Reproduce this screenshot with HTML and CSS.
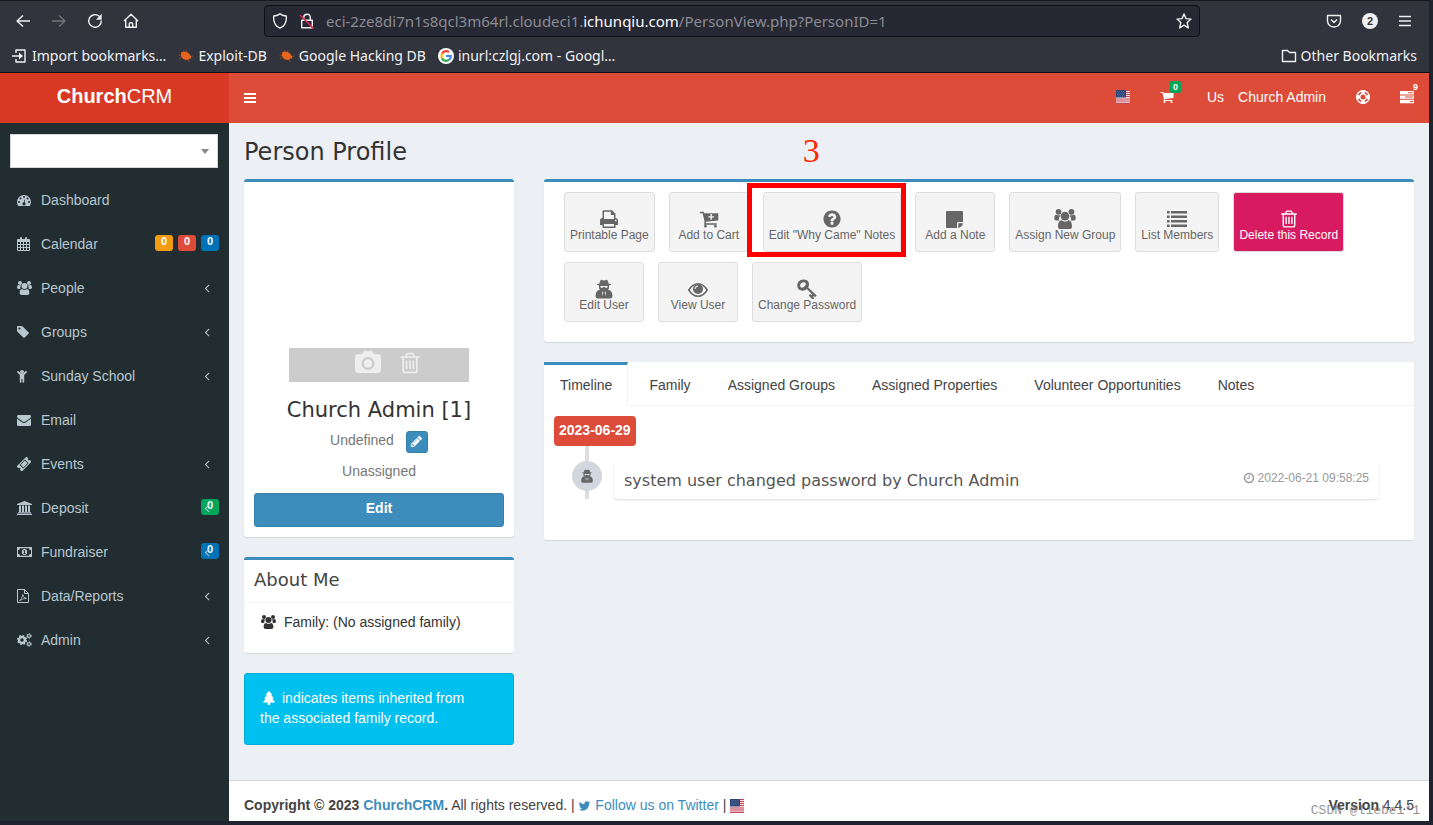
FILE: index.html
```html
<!DOCTYPE html>
<html lang="en">
<head>
<meta charset="utf-8">
<title>ChurchCRM: Person Profile</title>
<link rel="stylesheet" href="styles.css">
</head>
<body>
<svg class="sprite" aria-hidden="true">
  <symbol id="i-bars" viewBox="0 0 12 14"><path d="M0 2h12v2H0zM0 6h12v2H0zM0 10h12v2H0z"/></symbol>
  <symbol id="i-envelope" viewBox="0 0 1792 1792"><path d="M1792 710v794q0 66-47 113t-113 47h-1472q-66 0-113-47t-47-113v-794q44 49 101 87 362 246 497 345 57 42 92.500 65.500t94.500 48 110 24.500h2q51 0 110-24.500t94.500-48 92.500-65.500q170-123 498-345 57-39 100-87zm0-294q0 79-49 151t-122 123q-376 261-468 325-10 7-42.500 31t-54 38.500-52 32.500-57.500 27-50 9h-2q-23 0-50-9t-57.500-27-52-32.500-54-38.500-42.500-31q-91-64-262-182.500t-205-142.500q-62-42-117-115.500t-55-136.500q0-78 41.500-130t118.500-52h1472q65 0 112.500 47t47.500 113z"/></symbol>
  <symbol id="i-angle" viewBox="0 0 1792 1792"><path d="M1203 544q0 13-10 23l-393 393 393 393q10 10 10 23t-10 23l-50 50q-10 10-23 10t-23-10l-466-466q-10-10-10-23t10-23l466-466q10-10 23-10t23 10l50 50q10 10 10 23z"/></symbol>
  <symbol id="i-trash" viewBox="0 0 1792 1792"><path d="M704 736v576q0 14-9 23t-23 9h-64q-14 0-23-9t-9-23v-576q0-14 9-23t23-9h64q14 0 23 9t9 23zm256 0v576q0 14-9 23t-23 9h-64q-14 0-23-9t-9-23v-576q0-14 9-23t23-9h64q14 0 23 9t9 23zm256 0v576q0 14-9 23t-23 9h-64q-14 0-23-9t-9-23v-576q0-14 9-23t23-9h64q14 0 23 9t9 23zm128 724v-948h-896v948q0 22 7 40.500t14.500 27 10.500 8.500h832q3 0 10.500-8.500t14.500-27 7-40.500zm-672-1076h448l-48-117q-7-9-17-11h-317q-10 2-17 11zm928 32v64q0 14-9 23t-23 9h-96v948q0 83-47 143.500t-113 60.500h-832q-66 0-113-58.500t-47-141.500v-952h-96q-14 0-23-9t-9-23v-64q0-14 9-23t23-9h309l70-167q15-37 54-63t79-26h320q40 0 79 26t54 63l70 167h309q14 0 23 9t9 23z"/></symbol>
  <symbol id="i-pencil" viewBox="0 0 1792 1792"><path d="M491 1536l91-91-235-235-91 91v107h128v128h107zm523-928q0-22-22-22-10 0-17 7l-542 542q-7 7-7 17 0 22 22 22 10 0 17-7l542-542q7-7 7-17zm-54-192l416 416-832 832h-416v-416zm683 96q0 53-37 90l-166 166-416-416 166-165q36-38 90-38 53 0 91 38l235 234q37 39 37 91z"/></symbol>
  <symbol id="i-question" viewBox="0 0 1792 1792"><path d="M1024 1376v-192q0-14-9-23t-23-9h-192q-14 0-23 9t-9 23v192q0 14 9 23t23 9h192q14 0 23-9t9-23zm256-672q0-88-55.500-163t-138.500-116-170-41q-243 0-371 213-15 24 8 42l132 100q7 6 19 6 16 0 25-12 53-68 86-92 34-24 86-24 48 0 85.500 26t37.500 59q0 38-20 61t-68 45q-63 28-115.500 86.500t-52.500 125.500v36q0 14 9 23t23 9h192q14 0 23-9t9-23q0-19 21.500-49.500t54.500-49.500q32-18 49-28.500t46-35 44.500-48 28-60.500 12.500-81zm384 192q0 209-103 385.500t-279.500 279.500-385.500 103-385.500-103-279.500-279.500-103-385.500 103-385.500 279.500-279.500 385.500-103 385.500 103 279.500 279.500 103 385.500z"/></symbol>
  <symbol id="i-twitter" viewBox="0 0 1792 1792"><path d="M1684 408q-67 98-162 167 1 14 1 42 0 130-38 259.500t-115.500 248.500-184.500 210.500-258 146-323 54.500q-271 0-496-145 35 4 78 4 225 0 401-138-105-2-188-64.500t-114-159.500q33 5 61 5 43 0 85-11-112-23-185.500-111.500t-73.500-205.500v-4q68 38 146 41-66-44-105-115t-39-154q0-88 44-163 121 149 294.500 238.500t371.500 99.500q-8-38-8-74 0-134 94.500-228.500t228.500-94.500q140 0 236 102 109-21 205-78-37 115-142 178 93-10 186-50z"/></symbol>
  <symbol id="i-tag" viewBox="130 0 1792 1792"><path d="M576 448q0-53-37.500-90.500t-90.500-37.500-90.500 37.500-37.500 90.500 37.500 90.500 90.500 37.500 90.500-37.500 37.500-90.500zm1067 576q0 53-37 90l-491 492q-39 37-91 37-53 0-90-37l-715-716q-38-37-64.500-101t-26.500-117v-416q0-52 38-90t90-38h416q53 0 117 26.500t102 64.500l715 714q37 39 37 91z"/></symbol>
  <symbol id="i-cart" viewBox="0 0 1792 1792"><path d="M704 1536q0 52-38 90t-90 38-90-38-38-90 38-90 90-38 90 38 38 90zm896 0q0 52-38 90t-90 38-90-38-38-90 38-90 90-38 90 38 38 90zm128-1088v512q0 24-16.500 42.500t-40.500 21.500l-1044 122q13 60 13 70 0 16-24 64h920q26 0 45 19t19 45-19 45-45 19h-1024q-26 0-45-19t-19-45q0-11 8-31.500t16-36 21.500-40 15.500-29.500l-177-823h-204q-26 0-45-19t-19-45 19-45 45-19h256q16 0 28.500 6.500t19.500 15.500 13 24.500 8 26 5.500 29.500 4.500 26h1201q26 0 45 19t19 45z"/></symbol>
  <symbol id="i-cartplus" viewBox="0 0 1792 1792"><path fill-rule="evenodd" d="M704 1536q0 52-38 90t-90 38-90-38-38-90 38-90 90-38 90 38 38 90zm896 0q0 52-38 90t-90 38-90-38-38-90 38-90 90-38 90 38 38 90zm128-1088v512q0 24-16.500 42.500t-40.500 21.500l-1044 122q13 60 13 70 0 16-24 64h920q26 0 45 19t19 45-19 45-45 19h-1024q-26 0-45-19t-19-45q0-11 8-31.500t16-36 21.500-40 15.500-29.500l-177-823h-204q-26 0-45-19t-19-45 19-45 45-19h256q16 0 28.500 6.500t19.500 15.500 13 24.500 8 26 5.500 29.500 4.500 26h1201q26 0 45 19t19 45zM1024 448v192h-192v128h192v192h128v-192h192v-128h-192v-192z"/></symbol>
  <symbol id="i-dashboard" viewBox="0 0 14 14"><path d="M7 2a7 7 0 0 0-6.100 10.400q.2.600.7.600h10.800q.5 0 .7-.6A7 7 0 0 0 7 2z"/><g fill="#222d32"><circle cx="2" cy="9" r="1"/><circle cx="3.500" cy="5.500" r="1"/><circle cx="7" cy="4" r="1"/><circle cx="10.500" cy="5.500" r="1"/><circle cx="12" cy="9" r="1"/><circle cx="7" cy="10.800" r="1.600"/><path d="M6.600 10.500l.8-4 .7.200-.7 4z"/></g></symbol>
  <symbol id="i-calendar" viewBox="0 0 14 14"><path fill-rule="evenodd" d="M1 2h2V1q0-1 1-1t1 1v1h3V1q0-1 1-1t1 1v1h2q1 0 1 1v10q0 1-1 1H1q-1 0-1-1V3q0-1 1-1zm0 3v2h2V5zm3 0v2h2V5zm3 0v2h2V5zm3 0v2h2V5zM1 8v2h2V8zm3 0v2h2V8zm3 0v2h2V8zm3 0v2h2V8zM1 11v2h2v-2zm3 0v2h2v-2zm3 0v2h2v-2zm3 0v2h2v-2z"/></symbol>
  <symbol id="i-users" viewBox="0 0 15 14"><circle cx="3" cy="2" r="2"/><circle cx="12" cy="2" r="2"/><path d="M3.200 7.200Q3.200 5.600 4.300 4.300Q3 4.700 1.500 4Q0 3.800 0 6.600Q0 8 1.300 8h2.500q-.6-.3-.6-.8zM11.800 7.200q0-1.600-1.100-2.900 1.300.4 2.800-.3Q15 3.800 15 6.600 15 8 13.700 8h-2.500q.6-.3.600-.8z"/><circle cx="7.500" cy="5" r="3"/><path d="M5 7.900Q2.800 8 2.600 12q0 2 2 2h5.800q2 0 2-2Q12.200 8 10 7.900 7.500 9.800 5 7.900z"/></symbol>
  <symbol id="i-child" viewBox="0 0 14 14"><circle cx="5" cy="2.800" r="1.900"/><path d="M.3 2.300q.6-.6 1.300 0L4 4.600h2l2.400-2.300q.7-.6 1.300 0t0 1.300L7.200 6.100V13q0 .7-.8.700t-.9-.7v-3h-1v3q0 .7-.9.700t-.8-.7V6.100L.3 3.600q-.6-.7 0-1.300z"/></symbol>
  <symbol id="i-ticket" viewBox="0 0 14 14"><g transform="rotate(-45 7 7)"><path fill-rule="evenodd" d="M0 3.500h14V6q-1.300.1-1.300 1.100T14 8.200v2.600H0V8.200q1.300-.1 1.300-1.100T0 6zm3.200 1v5.200h7.600V4.500z"/><path d="M4 5.200h6V9H4z"/></g></symbol>
  <symbol id="i-bank" viewBox="0 0 15 14"><path d="M7.500 0L15 3v1H0V3zM2 4.500h2V11H2zM5 4.500h2V11H5zM8 4.500h2V11H8zM11 4.500h2V11h-2zM1 11.300h13v1H1zM0 12.800h15V14H0z"/></symbol>
  <symbol id="i-money" viewBox="0 0 15 14"><path fill-rule="evenodd" d="M0 2h15v10H0zM1 5.200v3.600q2 0 2 2h9q0-2 2-2V5.200q-2 0-2-2H3q0 2-2 2z"/><path fill-rule="evenodd" d="M7.500 4a2.700 3 0 1 1 0 6 2.700 3 0 0 1 0-6zM6.400 5.500v.8h.7v1.900h-.7V9h2.300v-.8H8V5.200h-.7z"/></symbol>
  <symbol id="i-pdf" viewBox="0 0 14 14"><path fill="none" stroke="currentColor" d="M.5.500h7l4 4v9H.5zM7.500.5v4h4"/><path fill="none" stroke="currentColor" stroke-width=".8" d="M2.500 11.700q2.500-1.500 3.100-5.700 0-1 .4-.1 0 3 3.500 3.500-3-.2-7 2.300z"/></symbol>
  <symbol id="i-cogs" viewBox="0 0 15 14"><circle cx="5" cy="7" r="3" fill="none" stroke="currentColor" stroke-width="2.400"/><circle cx="5" cy="7" r="4.300" fill="none" stroke="currentColor" stroke-width="1.500" stroke-dasharray="1.700 1.677"/><circle cx="12" cy="3" r="1.500" fill="none" stroke="currentColor" stroke-width="1.200"/><circle cx="12" cy="3" r="2.300" fill="none" stroke="currentColor" stroke-width=".9" stroke-dasharray="1.200"/><circle cx="12" cy="11" r="1.500" fill="none" stroke="currentColor" stroke-width="1.200"/><circle cx="12" cy="11" r="2.300" fill="none" stroke="currentColor" stroke-width=".9" stroke-dasharray="1.200"/></symbol>
  <symbol id="i-ring" viewBox="0 0 14 14"><circle cx="7" cy="7" r="6.300" fill="none" stroke="currentColor" stroke-width="1.300"/><circle cx="7" cy="7" r="3.100" fill="none" stroke="currentColor" stroke-width="1.200"/><g fill="none" stroke="currentColor" stroke-width="3.600"><path d="M5 2.600Q7 1.700 9 2.600M5 11.400q2 .9 4 0M2.600 5Q1.700 7 2.600 9M11.400 5q.9 2 0 4"/></g></symbol>
  <symbol id="i-tasks" viewBox="0 0 14 14"><path fill-rule="evenodd" d="M0 1h14v3.400H0zm8 1.200v1h5v-1zM0 5.400h14v3.400H0zm5 1.200v1h8v-1zM0 9.800h14v3.400H0zM10 11v1h3v-1z"/></symbol>
  <symbol id="i-camera" viewBox="0 0 26 22"><path fill-rule="evenodd" d="M9.500 0h7q1 0 1.500 1l1 2h3.500Q26 3 26 6.500v12q0 3.500-3.500 3.500h-19Q0 22 0 18.500v-12Q0 3 3.500 3H7l1-2q.5-1 1.500-1zM13 6a6.500 6.500 0 1 0 0 13 6.500 6.500 0 0 0 0-13zm0 2.300a4.200 4.200 0 1 1 0 8.400 4.200 4.200 0 0 1 0-8.400z"/></symbol>
  <symbol id="i-print" viewBox="0 0 20 20"><path fill-rule="evenodd" d="M3.500 9V2.500q0-1.200 1.200-1.200H13l3.500 3.500V9q2.500 0 2.500 2.500V16h-2.500v3h-13v-3H1v-4.500Q1 9 3.500 9zM5 10h10V6h-3.200V2.800H5zm0 5v2.500h10V15zm11.700-4.500a.9.900 0 1 0 0 1.800.9.900 0 0 0 0-1.800z"/></symbol>
  <symbol id="i-note" viewBox="0 0 20 20"><path d="M1 3q0-1 1-1h15q1 0 1 1v10h-5q-1 0-1 1v5H2q-1 0-1-1zM13.300 14.300H18q-.2 1.500-1 2.300l-1.500 1.500q-.8.700-2.200.9z"/></symbol>
  <symbol id="i-list" viewBox="0 0 20 20"><path d="M0 2h2.600v2.600H0zm4 0h16v2.600H4zM0 6.500h2.600v2.600H0zm4 0h16v2.600H4zM0 11h2.600v2.600H0zm4 0h16v2.600H4zM0 15.500h2.600v2.600H0zm4 0h16v2.600H4z"/></symbol>
  <symbol id="i-secret" viewBox="0 0 20 20"><path d="M7.500.8q1.300.8 2.500.8t2.500-.8q1.500 0 2 3.700 2.700.4 2.700 1 0 .5-2.200 1v2.800l-1 1.200q3.800.8 4.400 5.500.2 3.500-2 3.500H3.600q-2.200 0-2-3.500.6-4.700 4.400-5.500L5 9.300V6.500q-2.200-.5-2.200-1 0-.6 2.700-1Q6 .8 7.500.8z"/><path fill="#f4f4f4" d="M6.300 7h7.400v.6Q13.400 9 12.200 9q-1.200 0-1.700-1.200h-1Q9 9 7.800 9 6.600 9 6.300 7.600zM8 12l1.300 1.800L8.500 17zm4 0l-1.300 1.800.8 3.200z"/></symbol>
  <symbol id="i-eye" viewBox="0 0 20 20"><path fill="none" stroke="currentColor" stroke-width="1.500" d="M.8 11Q4.600 4.700 10 4.700T19.200 11Q15.400 17.300 10 17.300T.8 11z"/><path fill-rule="evenodd" d="M10 5a5 5 0 1 1 0 10 5 5 0 0 1 0-10zm0 1.600q-3.300.1-3.300 3.400h1q0-2.300 2.300-2.400z"/></symbol>
  <symbol id="i-key" viewBox="0 0 20 20"><path fill-rule="evenodd" d="M1.500 2.500Q4 .3 7.300.6q4.800.4 4.700 5 0 1.700-.8 3l8.500 8-1.600 1.600-1.200-1.100-.9.900 1.300 1.300-1.400 1.400-4.200-4.200 1.400-1.400 1.300 1.200.9-.9-5.500-5.300q-1.600 1.600-4.200 1.700Q.8 11.400.3 7.300q-.1-2.800 1.200-4.800zm2.400 2Q2.700 6.300 3.400 7.700q1.400 1.600 3 .6 2.400-1.300 2.500-3.300-.3-1.900-2.200-1.700-1.500.1-2.800 1.200z"/></symbol>
  <symbol id="i-clock" viewBox="0 0 12 12"><circle cx="6" cy="6" r="4.400" fill="none" stroke="currentColor" stroke-width="1.500"/><path fill="none" stroke="currentColor" d="M6.200 3.200v3.200H4"/></symbol>
  <symbol id="i-tree" viewBox="0 0 14 14"><path d="M7 0l3.500 3.700H8.900L12 7.500h-1.800l3 4H8.300V14H5.700v-2.500H.8l3-4H2l3.100-3.800H3.500z"/></symbol>
  <symbol id="i-flag" viewBox="0 0 14 14"><path fill="#f3dfe1" d="M0 0h14v14H0z"/><path fill="#c4485a" d="M0 0h14v1H0zM0 2h14v1H0zM0 4h14v1H0zM0 6h14v1H0zM0 8.500h14v1H0zM0 10.500h14v1H0zM0 12.800h14V14H0z"/><path fill="#2d4678" d="M0 0h10v7.500H0z"/><path stroke="#6d80a6" stroke-width=".7" stroke-dasharray=".8 1.200" d="M1 1.500h8M2 3h8M1 4.500h8M2 6h8"/></symbol>
  <symbol id="i-bug" viewBox="0 0 16 14"><path fill="#e9641c" d="M3 3.500q3-1.800 5.500-.5 3 .8 4.200 4 .8.500 1.800.5l-1.700.8.500 1.600-1.500-.7q-1 2.300-4 1.600Q4.500 10.500 3 7z"/><path fill="none" stroke="#9a4a20" stroke-width=".8" d="M5 1l1.500 2M8.500 1L9 3.200M3 6.500L.5 6M3.500 8.500L1 9.500M10 11l1.500 2M13 7.500l2.500-.5M2.500 3.500L4 4.500"/></symbol>
  <symbol id="i-google" viewBox="0 0 16 16"><circle cx="8" cy="8" r="8" fill="#fff"/><g fill="none" stroke-width="2.200"><path stroke="#ea4335" d="M4 5.700Q5.400 3.200 8 3.200q1.700 0 3 1"/><path stroke="#fbbc05" d="M4 5.600Q2.900 8 4 10.400"/><path stroke="#34a853" d="M4 10.200q1.400 2.600 4 2.600 1.800 0 3.100-1.100"/><path stroke="#4285f4" d="M8 8h4.800q0 2.500-1.700 3.800"/></g></symbol>
</svg>

<div class="browser">
  <div class="toolbar">
    <div class="nav-buttons">
      <button class="tool" aria-label="Back"><svg width="16" height="16"><path class="line" d="M15 8H2M8 2.500L2 8l6 5.500"/></svg></button>
      <button class="tool tool-off" aria-label="Forward"><svg width="16" height="16"><path class="line" d="M1 8h13M8 2.500L14 8l-6 5.500"/></svg></button>
      <button class="tool" aria-label="Reload"><svg width="16" height="16"><path class="line" d="M14.300 7.500A6.300 6.300 0 1 1 12.500 3.500"/><path d="M14.700.8v6H9z"/></svg></button>
      <button class="tool" aria-label="Home"><svg width="16" height="16"><path class="line" d="M1 8l7-6.700L15 8M2.700 7v7.300h10.600V7M6.300 14v-3.200q0-1 1-1h1.400q1 0 1 1V14"/></svg></button>
    </div>
    <div class="urlbar">
      <svg width="16" height="16"><path class="line" d="M8 .8Q11 2.800 14.300 3q.8 9-6.300 12.200Q.9 12 1.700 3 5 2.800 8 .8z"/></svg>
      <svg width="16" height="16"><path class="line" d="M4.700 7V4.500Q4.800 1.300 8 1.200t3.300 3.300V7M2.700 7.200h10.600v7.600H2.700z"/><path stroke="#e22850" stroke-width="1.600" d="M1 2l13.500 13.500"/></svg>
      <span class="url">eci-2ze8di7n1s8qcl3m64rl.cloudeci1.<b>ichunqiu.com</b>/PersonView.php?PersonID=1</span>
      <svg width="16" height="16"><path class="line" d="M8 1l2 4.600 5 .5-3.800 3.400L12.300 15 8 12.200 3.700 15l1.100-5.500L1 6.100l5-.5z"/></svg>
    </div>
    <div class="tools">
      <button class="tool" aria-label="Save to Pocket"><svg width="16" height="16"><path class="line" d="M1.500 2.500h13V8q-.5 5.600-6.500 6Q2 13.600 1.500 8zM5 6.500l3 3 3-3"/></svg></button>
      <button class="tool count" aria-label="Account">2</button>
      <button class="tool" aria-label="Menu"><svg width="14" height="14"><path class="line" d="M1 2.500h12M1 7h12M1 11.500h12"/></svg></button>
    </div>
  </div>
  <div class="bookmarks">
    <a href="#"><svg width="16" height="16"><path class="line" d="M4 5V2h9v12H4v-3M0 8h9"/><path d="M7 4.500L11 8l-4 3.500z"/></svg>Import bookmarks…</a>
    <a href="#"><svg width="16" height="14"><use href="#i-bug"/></svg>Exploit-DB</a>
    <a href="#"><svg width="16" height="14"><use href="#i-bug"/></svg>Google Hacking DB</a>
    <a href="#"><svg width="16" height="16"><use href="#i-google"/></svg>inurl:czlgj.com - Googl…</a>
    <a href="#" class="other"><svg width="16" height="16"><path class="line" d="M1.500 13.500v-11h5l2 2h6v9z"/></svg>Other Bookmarks</a>
  </div>
</div>

<header class="topbar">
  <a href="#" class="logo"><b>Church</b>CRM</a>
  <nav class="navbar">
    <button class="toggle" aria-label="Toggle navigation"><svg width="12" height="14"><use href="#i-bars"/></svg></button>
    <a href="#" class="nav-flag" aria-label="Language"><svg width="14" height="14"><use href="#i-flag"/></svg></a>
    <a href="#" class="nav-cart" aria-label="Cart"><svg width="14" height="14"><use href="#i-cart"/></svg><span class="badge badge-green">0</span></a>
    <a href="#" class="nav-user"><span>Us</span><span>Church Admin</span></a>
    <a href="#" class="nav-help" aria-label="Support"><svg width="14" height="14"><use href="#i-ring"/></svg></a>
    <a href="#" class="nav-tasks" aria-label="Tasks"><svg width="14" height="14"><use href="#i-tasks"/></svg><span class="badge">9</span></a>
  </nav>
</header>

<div class="page">
  <aside class="sidebar">
    <div class="search">
      <select aria-label="Search"><option></option></select>
      <svg width="8" height="5"><path d="M0 0h8L4 5z"/></svg>
    </div>
    <ul class="menu">
      <li><a href="#"><svg width="14" height="14"><use href="#i-dashboard"/></svg><span>Dashboard</span></a></li>
      <li><a href="#"><svg width="14" height="14"><use href="#i-calendar"/></svg><span>Calendar</span><i class="labels"><small class="yellow">0</small><small class="red">0</small><small class="blue">0</small></i></a></li>
      <li><a href="#"><svg width="15" height="14"><use href="#i-users"/></svg><span>People</span><svg class="angle" width="14" height="14"><use href="#i-angle"/></svg></a></li>
      <li><a href="#"><svg width="14" height="14"><use href="#i-tag"/></svg><span>Groups</span><svg class="angle" width="14" height="14"><use href="#i-angle"/></svg></a></li>
      <li><a href="#"><svg width="14" height="14"><use href="#i-child"/></svg><span>Sunday School</span><svg class="angle" width="14" height="14"><use href="#i-angle"/></svg></a></li>
      <li><a href="#"><svg width="14" height="14"><use href="#i-envelope"/></svg><span>Email</span></a></li>
      <li><a href="#"><svg width="14" height="14"><use href="#i-ticket"/></svg><span>Events</span><svg class="angle" width="14" height="14"><use href="#i-angle"/></svg></a></li>
      <li><a href="#"><svg width="15" height="14"><use href="#i-bank"/></svg><span>Deposit</span><i class="labels"><small class="green">0<svg class="angle-over" width="14" height="14"><use href="#i-angle"/></svg></small></i></a></li>
      <li><a href="#"><svg width="15" height="14"><use href="#i-money"/></svg><span>Fundraiser</span><i class="labels"><small class="blue">0<svg class="angle-over" width="14" height="14"><use href="#i-angle"/></svg></small></i></a></li>
      <li><a href="#"><svg width="14" height="14"><use href="#i-pdf"/></svg><span>Data/Reports</span><svg class="angle" width="14" height="14"><use href="#i-angle"/></svg></a></li>
      <li><a href="#"><svg width="15" height="14"><use href="#i-cogs"/></svg><span>Admin</span><svg class="angle" width="14" height="14"><use href="#i-angle"/></svg></a></li>
    </ul>
  </aside>

  <div class="wrapper">
    <main class="content">
      <h1>Person Profile</h1>
      <div class="row">
        <div class="col-side">
          <section class="box profile">
            <div class="photo">
              <div class="photo-tools">
                <a href="#" aria-label="Upload photo"><svg width="26" height="22"><use href="#i-camera"/></svg></a>
                <a href="#" aria-label="Delete photo"><svg width="24" height="24"><use href="#i-trash"/></svg></a>
              </div>
            </div>
            <h3>Church Admin [1]</h3>
            <p class="role">Undefined <button class="pencil" aria-label="Edit role"><svg width="13" height="13"><use href="#i-pencil"/></svg></button></p>
            <p class="class">Unassigned</p>
            <a href="#" class="edit">Edit</a>
          </section>

          <section class="box about">
            <h3>About Me</h3>
            <p><svg width="15" height="14"><use href="#i-users"/></svg>Family: (No assigned family)</p>
          </section>

          <div class="callout"><svg width="14" height="14"><use href="#i-tree"/></svg>indicates items inherited from the associated family record.</div>
        </div>

        <div class="col-main">
          <section class="box">
            <div class="actions">
              <a href="#" class="app"><svg width="20" height="20"><use href="#i-print"/></svg>Printable Page</a>
              <a href="#" class="app"><svg width="20" height="20"><use href="#i-cartplus"/></svg>Add to Cart</a>
              <div class="marked">
                <a href="#" class="app"><svg width="20" height="20"><use href="#i-question"/></svg>Edit "Why Came" Notes</a>
                <div class="frame"></div>
                <span class="step">3</span>
              </div>
              <a href="#" class="app"><svg width="20" height="20"><use href="#i-note"/></svg>Add a Note</a>
              <a href="#" class="app"><svg width="22" height="20"><use href="#i-users"/></svg>Assign New Group</a>
              <a href="#" class="app"><svg width="20" height="20"><use href="#i-list"/></svg>List Members</a>
              <a href="#" class="app app-delete"><svg width="20" height="20"><use href="#i-trash"/></svg>Delete this Record</a>
              <a href="#" class="app"><svg width="20" height="20"><use href="#i-secret"/></svg>Edit User</a>
              <a href="#" class="app"><svg width="20" height="20"><use href="#i-eye"/></svg>View User</a>
              <a href="#" class="app"><svg width="20" height="20"><use href="#i-key"/></svg>Change Password</a>
            </div>
          </section>

          <section class="tabs">
            <nav class="tab-list">
              <a href="#" class="active">Timeline</a>
              <a href="#">Family</a>
              <a href="#">Assigned Groups</a>
              <a href="#">Assigned Properties</a>
              <a href="#">Volunteer Opportunities</a>
              <a href="#">Notes</a>
            </nav>
            <div class="timeline">
              <span class="date">2023-06-29</span>
              <div class="event">
                <div class="track"><span class="dot"><svg width="14" height="14"><use href="#i-secret"/></svg></span></div>
                <div class="entry">
                  <h3>system user changed password by Church Admin</h3>
                  <time><svg width="12" height="12"><use href="#i-clock"/></svg>2022-06-21 09:58:25</time>
                </div>
              </div>
            </div>
          </section>
        </div>
      </div>
    </main>

    <footer class="footer">
      <div><b>Copyright © 2023 <a href="#">ChurchCRM</a>.</b> All rights reserved. | <a href="#"><svg width="13" height="14"><use href="#i-twitter"/></svg> Follow us on Twitter</a> | <svg width="14" height="14"><use href="#i-flag"/></svg></div>
      <div class="version"><b>Version</b> 4.4.5<span class="watermark">CSDN @liebe1*1</span></div>
    </footer>
  </div>
</div>
</body>
</html>
```
FILE: styles.css
```css
* { box-sizing: border-box; }

body {
  margin: 0;
  padding: 0 4px 4px 0;
  min-height: 100vh;
  display: flex;
  flex-direction: column;
  background: #1f2330;
  color: #333;
  font: 14px/20px "Liberation Sans", Arial, sans-serif;
}

a { color: inherit; text-decoration: none; }
h1, h3, p, ul { margin: 0; padding: 0; }
ul { list-style: none; }
button { font: inherit; color: inherit; background: none; border: 0; padding: 0; }
svg { fill: currentColor; flex: none; }
.sprite { position: absolute; width: 0; height: 0; }
.line { fill: none; stroke: currentColor; stroke-width: 1.4; stroke-linejoin: round; }

/* Browser window */
.browser {
  background: #32343d;
  border-top: 1px solid #16171c;
  border-bottom: 1px solid #101116;
  color: #f0f0f2;
  font: 14px/20px "Noto Sans", sans-serif;
}
.toolbar { display: flex; align-items: center; height: 40px; }
.nav-buttons { display: flex; gap: 20px; width: 264px; padding-left: 15px; }
.tool { display: flex; align-items: center; justify-content: center; }
.tool-off { opacity: .35; }
.urlbar {
  flex: 1;
  display: flex;
  align-items: center;
  gap: 11px;
  height: 32px;
  padding: 0 7px;
  background: #262833;
  border: 1px solid #0e0f14;
  border-radius: 4px;
}
.url { flex: 1; color: #8b8c93; font-size: 15px; white-space: nowrap; }
.url b { color: #fbfbfe; font-weight: 400; }
.tools { display: flex; align-items: center; justify-content: flex-end; gap: 20px; width: 229px; padding-right: 17px; }
.count {
  width: 16px;
  height: 16px;
  border-radius: 50%;
  background: #f0f0f2;
  color: #32343d;
  font: bold 11px/16px "Liberation Sans", sans-serif;
}
.bookmarks { display: flex; align-items: center; gap: 12px; height: 31px; padding: 0 12px 2px 12px; }
.bookmarks a { display: flex; align-items: center; gap: 4px; }
.bookmarks .other { margin-left: auto; }

/* Top bar */
.topbar { display: flex; height: 50px; color: #fff; }
.logo { width: 229px; background: #d73925; font-size: 20px; line-height: 46px; text-align: center; }
.navbar { flex: 1; display: flex; align-items: center; background: #dd4b39; padding: 0 15px 2px; }
.navbar svg { display: block; }
.toggle { margin: 2px auto 0 0; }
.navbar > a { position: relative; }
.nav-cart { margin-left: 30px; }
.nav-user { display: flex; gap: 14px; margin-left: 33px; }
.nav-help { margin-left: 30px; }
.nav-tasks { margin-left: 30px; }
.badge {
  position: absolute;
  top: -9px;
  right: -7px;
  padding: 0 3px;
  border-radius: 2px;
  font-size: 9px;
  font-weight: bold;
  line-height: 12px;
}
.badge-green, .green { background: #00a65a; }

/* Sidebar */
.page { flex: 1; display: flex; }
.sidebar { width: 229px; background: #222d32; color: #b8c7ce; padding-top: 11px; }
.search { position: relative; margin: 0 11px 10px 10px; }
.search select {
  display: block;
  width: 100%;
  height: 34px;
  background: #fff;
  border: 1px solid #d2d6de;
  border-radius: 0;
  appearance: none;
}
.search svg { position: absolute; right: 9px; top: 15px; color: #888; }
.menu a { display: flex; align-items: center; height: 44px; padding: 0 10px 0 17px; }
.menu a > span { flex: 1; }
.menu a > svg:first-child { margin-right: 9px; }
.menu a > svg[width="14"]:first-child { margin-right: 10px; }
.angle { margin-right: 5px; }
.labels { display: flex; gap: 5px; font-style: normal; }
.labels small {
  position: relative;
  width: 18px;
  height: 16px;
  margin-bottom: 2px;
  border-radius: 3px;
  color: #fff;
  font-size: 11px;
  font-weight: bold;
  line-height: 13px;
  text-align: center;
}
.angle-over { position: absolute; left: -1px; top: 2px; color: #b8c7ce; }
.yellow { background: #f39c12; }
.red { background: #dd4b39; }
.blue { background: #0073b7; }

/* Content */
.wrapper { flex: 1; min-width: 0; display: flex; flex-direction: column; background: #ecf0f5; }
.content { flex: 1; padding: 15px; }
h1, h3 { font-family: "DejaVu Sans", sans-serif; font-weight: 400; }
h1 { font-size: 24px; line-height: 28px; margin-bottom: 13px; }
.row { display: flex; margin: 0 -15px; }
.col-side { width: 25%; padding: 0 15px; }
.col-main { width: 75%; padding: 0 15px; }
.box {
  margin-bottom: 20px;
  background: #fff;
  border-top: 3px solid #3c8dbc;
  border-radius: 3px;
  box-shadow: 0 1px 1px rgba(0, 0, 0, .1);
}

.profile { padding: 10px; text-align: center; }
.photo { width: 180px; margin: 0 auto; padding-top: 156px; }
.photo-tools { display: flex; justify-content: center; gap: 17px; height: 34px; padding: 3px 0 0 18px; background: #ccc; color: #eee; }
.profile h3 { margin-top: 15px; font-size: 21px; line-height: 26px; }
.role { display: flex; justify-content: center; gap: 12px; margin-top: 7px; color: #777; }
.pencil { display: flex; justify-content: center; width: 22px; height: 22px; margin-top: 1px; padding-top: 3px; background: #3c8dbc; border: 1px solid #367fa9; border-radius: 3px; color: #fff; }
.class { margin-top: 8px; color: #777; }
.edit {
  display: block;
  margin-top: 12px;
  padding: 4px 12px 8px;
  background: #3c8dbc;
  border: 1px solid #367fa9;
  border-radius: 3px;
  color: #fff;
  font-weight: bold;
}

.about { padding-bottom: 21px; }
.about h3 { padding: 9px 10px 11px; border-bottom: 1px solid #f4f4f4; color: #444; font-size: 18px; line-height: 22px; }
.about p { display: flex; align-items: center; gap: 8px; padding: 9px 17px 0; }
.callout { margin-bottom: 20px; padding: 14px 35px 16px 15px; background: #00c0ef; border: 1px solid #00acd6; border-radius: 3px; color: #fff; }
.callout svg { margin: 0 6px 0 2px; vertical-align: -2px; }

/* Action buttons */
.actions { display: flex; flex-wrap: wrap; gap: 10px 14px; padding: 10px 20px 20px; }
.app {
  display: block;
  min-width: 80px;
  height: 60px;
  padding: 16px 5px 0;
  background: #f4f4f4;
  border: 1px solid #ddd;
  border-radius: 3px;
  color: #666;
  font-size: 12px;
  line-height: 14px;
  text-align: center;
}
.app svg { display: block; margin: 0 auto -1px; }
.app-delete { background: #d81b60; color: #fff; }
.marked { position: relative; }
.frame { position: absolute; inset: -9px -5px -5px -16px; border: 5px solid #f00; }
.step { position: absolute; left: 40px; top: -61px; color: #ff2600; font: 34px/40px "Liberation Serif", serif; }

/* Tabs and timeline */
.tabs { background: #fff; border-radius: 3px; box-shadow: 0 1px 1px rgba(0, 0, 0, .1); }
.tab-list { display: flex; gap: 5px; border-bottom: 1px solid #f4f4f4; color: #444; }
.tab-list a { padding: 10px 15px; border: solid transparent; border-width: 3px 1px 0; }
.tab-list .active { margin-bottom: -1px; background: linear-gradient(#3c8dbc, #3c8dbc) 0 0 / 100% 3px no-repeat border-box #fff; border-right-color: #f4f4f4; }
.timeline { padding: 10px 35px 41px 10px; }
.date { display: inline-block; height: 30px; padding: 4px 5px 6px; background: #dd4b39; border-radius: 4px; color: #fff; font-weight: bold; vertical-align: top; }
.event { display: flex; gap: 12px; padding-left: 18px; }
.track { width: 30px; padding-top: 15px; background: linear-gradient(#ddd, #ddd) 13px 0 / 4px 100% no-repeat; }
.dot { display: flex; align-items: center; justify-content: center; width: 30px; height: 30px; border-radius: 50%; background: #d2d6de; color: #666; }
.entry { flex: 1; display: flex; justify-content: space-between; margin-top: 15px; padding: 10px; border-radius: 3px; box-shadow: 0 1px 2px rgba(0, 0, 0, .15); color: #555; }
.entry h3 { font-size: 16px; line-height: 20px; margin-bottom: -2px; }
.entry time { display: flex; align-items: center; gap: 3px; color: #999; font-size: 12px; line-height: 14px; height: 14px; }

.footer { display: flex; justify-content: space-between; padding: 14px 15px 6px; background: #fff; border-top: 1px solid #d2d6de; color: #444; }
.footer a { color: #3c8dbc; }
.footer svg { vertical-align: -3px; }
.version { position: relative; }
.watermark { position: absolute; right: -6px; top: 6px; color: rgba(110, 110, 110, .75); font: 13px/20px "Liberation Mono", monospace; white-space: nowrap; }
```
